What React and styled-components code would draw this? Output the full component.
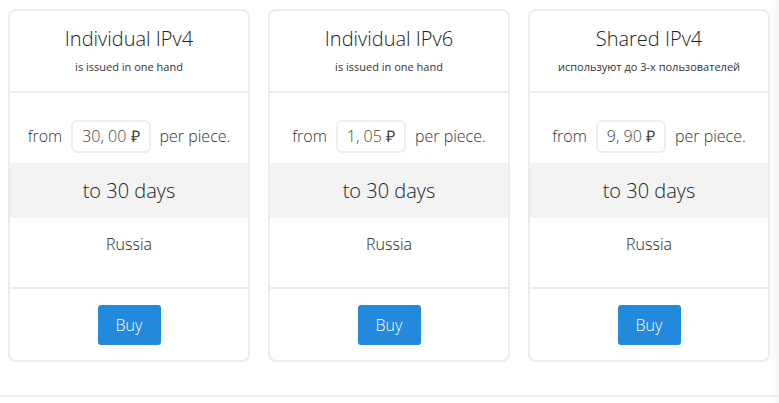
import React from "react";
import styled, { createGlobalStyle } from "styled-components";

const Global = createGlobalStyle`
  html, body { margin: 0; padding: 0; background: #fff; }
  body { font-family: "Open Sans", "Liberation Sans", sans-serif; font-weight: 300; color: #333; }
`;

const Page = styled.div`
  width: 779px;
  height: 403px;
  box-sizing: border-box;
  background: linear-gradient(to right, #fff 0, #fff 769px, #f7f7f7 779px);
`;

const Cards = styled.div`
  display: grid;
  grid-template-columns: repeat(3, 242px);
  gap: 18px;
  padding: 9px 9px 0 8px;
`;

const Card = styled.div`
  border: 2px solid #ececec;
  border-radius: 8px;
  background: #fff;
  overflow: hidden;
  display: flex;
  flex-direction: column;
`;

const Header = styled.div`
  height: 82px;
  box-sizing: border-box;
  padding-top: 16px;
  border-bottom: 2px solid #ececec;
  text-align: center;
`;

const Title = styled.div`
  font-size: 20px;
  line-height: 24px;
  color: #222;
`;

const Sub = styled.div`
  margin-top: 8px;
  font-size: 11px;
  line-height: 15px;
  font-weight: 400;
  color: #333;
`;

const PriceRow = styled.div`
  height: 70px;
  display: flex;
  align-items: center;
  justify-content: center;
  gap: 9px;
  font-size: 16px;
  color: #333;
  padding-top: 16px;
  box-sizing: border-box;
`;

const PriceBox = styled.div`
  height: 33px;
  box-sizing: border-box;
  padding: 0 9px;
  border: 2px solid #eeeeee;
  border-radius: 6px;
  display: flex;
  align-items: center;
  font-size: 16px;
  color: #444;
`;

const Days = styled.div`
  height: 55px;
  background: #f3f3f3;
  display: flex;
  align-items: center;
  justify-content: center;
  font-size: 20px;
  color: #222;
`;

const Country = styled.div`
  height: 71px;
  box-sizing: border-box;
  padding-top: 16px;
  text-align: center;
  font-size: 16px;
  line-height: 20px;
  color: #222;
  border-bottom: 2px solid #ececec;
`;

const Footer = styled.div`
  display: flex;
  justify-content: center;
  padding: 16px 0 15px;
`;

const BuyButton = styled.button`
  width: 63px;
  height: 40px;
  border: 0;
  border-radius: 3px;
  background: #2389dd;
  color: #fff;
  font-family: "Open Sans", "Liberation Sans", sans-serif;
  font-weight: 300;
  font-size: 16px;
  padding: 0;
  cursor: pointer;
`;

const BottomLine = styled.div`
  margin-top: 33px;
  height: 2px;
  background: #ececec;
`;

const plans = [
  { title: "Individual IPv4", sub: "is issued in one hand", price: "30, 00" },
  { title: "Individual IPv6", sub: "is issued in one hand", price: "1, 05" },
  { title: "Shared IPv4", sub: "используют до 3-х пользователей", price: "9, 90" },
];

export default function App() {
  return (
    <Page>
      <Global />
      <Cards>
        {plans.map((p) => (
          <Card key={p.title}>
            <Header>
              <Title>{p.title}</Title>
              <Sub>{p.sub}</Sub>
            </Header>
            <PriceRow>
              <span>from</span>
              <PriceBox>{p.price} ₽</PriceBox>
              <span>per piece.</span>
            </PriceRow>
            <Days>to 30 days</Days>
            <Country>Russia</Country>
            <Footer>
              <BuyButton>Buy</BuyButton>
            </Footer>
          </Card>
        ))}
      </Cards>
      <BottomLine />
    </Page>
  );
}
